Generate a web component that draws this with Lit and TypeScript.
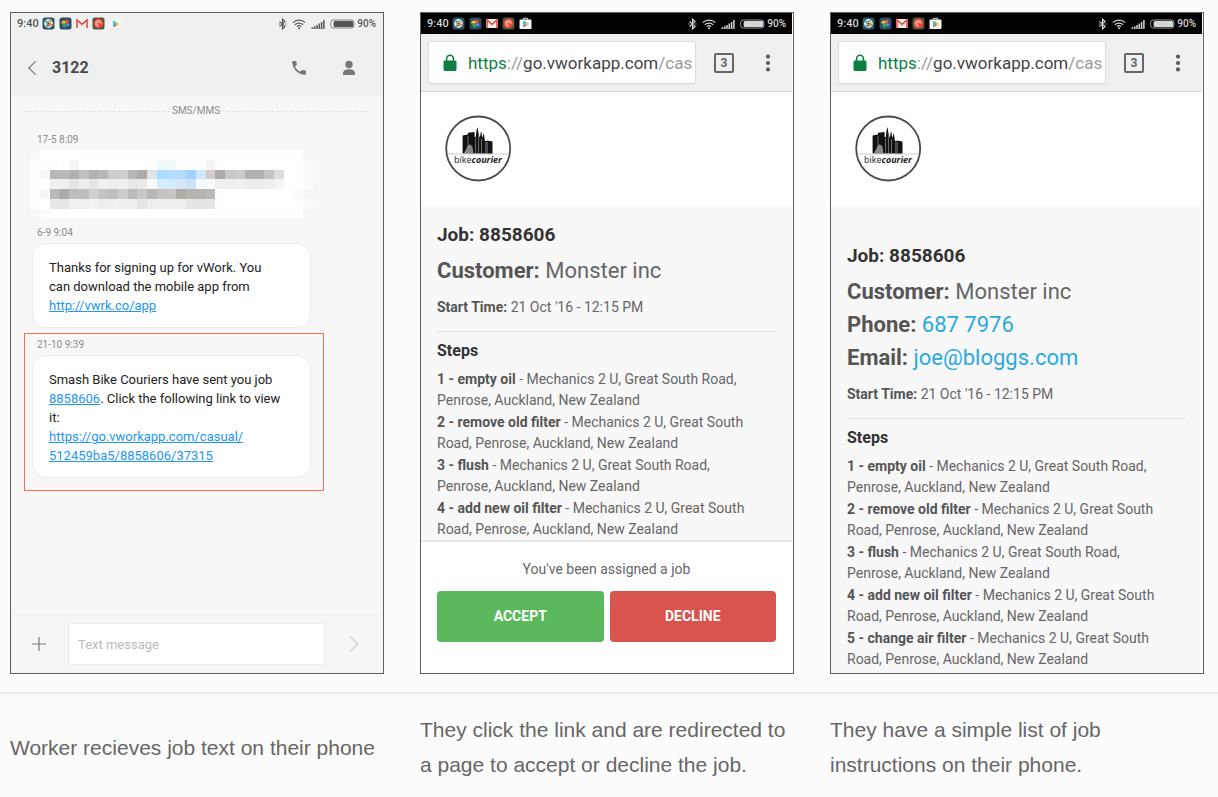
import { LitElement, html, css, svg, nothing } from "lit";
import { customElement, property } from "lit/decorators.js";

@customElement("status-bar")
class StatusBar extends LitElement {
  @property({ type: Boolean, reflect: true }) dark = false;

  static styles = css`
    :host {
      display: flex;
      align-items: center;
      height: 21px;
      flex: none;
      padding: 0 7px 0 6px;
      color: #555;
      font: 500 11px/21px Roboto, sans-serif;
    }
    :host([dark]) {
      padding-right: 6px;
      background: #000;
      color: #d6d6d6;
    }
    .apps {
      display: flex;
      gap: 4px;
      margin-left: 3px;
      flex: 1;
    }
    .radios {
      display: flex;
      align-items: center;
      gap: 5px;
      margin-right: 2px;
    }
    .charge {
      font-size: 10px;
    }
    svg {
      display: block;
    }
  `;

  render() {
    return html`
      <span>9:40</span>
      <span class="apps">
        <svg width="13" height="13" viewBox="0 0 13 13">
          <rect x=".5" y=".5" width="12" height="12" rx="2.5" fill="#2f5468" />
          <circle cx="6.5" cy="6.5" r="4.4" fill="#e9f2ee" />
          <path d="M3 5.4 9.4 3.4" stroke="#58c0c8" stroke-width="1.3" />
          <path d="M3.8 9.2 10.2 7.2" stroke="#d43a5c" stroke-width="1.3" />
          <path d="M4.2 3.4 6.2 10" stroke="#3aa673" stroke-width="1.2" />
          <path d="M7.4 2.8 9.2 9.4" stroke="#dfa02c" stroke-width="1.2" />
          <circle cx="6.6" cy="6.3" r=".9" fill="#333" />
        </svg>
        <svg width="13" height="13" viewBox="0 0 13 13">
          <rect x=".5" y=".5" width="12" height="12" rx="2.5" fill="#2c4c62" />
          <path d="M6.5 6.5V2.2c2 0 3.1 1.2 3.1 2.6 0 .8-.3 1.4-.8 1.7z" fill="#e8503f" />
          <path d="M6.5 6.5h4.3c0 2-1.2 3.1-2.6 3.1-.8 0-1.4-.3-1.7-.8z" fill="#4a8df0" />
          <path d="M6.5 6.5v4.3c-2 0-3.1-1.2-3.1-2.6 0-.8.3-1.4.8-1.7z" fill="#37a65a" />
          <path d="M6.5 6.5H2.2c0-2 1.2-3.1 2.6-3.1.8 0 1.4.3 1.7.8z" fill="#f4bf2c" />
        </svg>
        <svg width="12" height="13" viewBox="0 0 12 13">
          ${this.dark
            ? svg`<rect x="0" y="2" width="12" height="9" rx="1" fill="#f3eeee" />`
            : nothing}
          <path d="M1 11V3l5 4.4L11 3v8" fill="none" stroke="#dc4c40" stroke-width="1.6" />
        </svg>
        <svg width="13" height="13" viewBox="0 0 13 13">
          <rect x=".5" y=".5" width="12" height="12" rx="2.5" fill="#46563a" />
          <circle cx="6.5" cy="6.5" r="4.9" fill="#ee4538" />
          <path d="M9.4 6.3a2.9 2.9 0 1 0-2.9 3.1M8 6.4a1.5 1.5 0 1 0-1.5 1.5"
            fill="none" stroke="#ffd9d4" stroke-width=".9" />
        </svg>
        <svg width="13" height="13" viewBox="0 0 13 13">
          ${this.dark
            ? svg`<path d="M4.3 3V1.3h4.4V3" fill="none" stroke="#ddd" stroke-width="1" />
                <rect x=".5" y="2.6" width="12" height="9.4" rx=".8" fill="#f4f4f4" />`
            : svg`<rect x=".8" y="2.2" width="11.4" height="9.8" rx=".8" fill="#f8f8f8" />
                <path d="M1 12h11" stroke="#dcdede" stroke-width=".8" />`}
          <path d="M4 3.6v7l2.6-3.5z" fill="#2fc1ec" />
          <path d="M4 3.6 8 5.8 6.6 7.1z" fill="#34c37c" />
          <path d="M4 10.6 8 8.4 6.6 7.1z" fill="#ee4456" />
          <path d="M8 5.8 10.2 7.1 8 8.4 6.6 7.1z" fill="#f8b928" />
        </svg>
      </span>
      <span class="radios">
        <svg width="9" height="12" viewBox="0 0 9 12">
          <path d="M1.4 3.4 7 8.4 4.5 10.8V1.2L7 3.6 1.4 8.6"
            fill="none" stroke="currentColor" stroke-width="1.2" />
          <path d="M.6 6h1.2M7.2 6h1.2" stroke="currentColor" stroke-width="1.2" />
        </svg>
        <svg width="14" height="12" viewBox="0 0 14 12">
          <path d="M.8 4.6a9 9 0 0 1 12.4 0M2.8 6.7a6.2 6.2 0 0 1 8.4 0M4.8 8.6a3.4 3.4 0 0 1 4.4 0"
            fill="none" stroke="currentColor" stroke-width="1.2" />
          <circle cx="7" cy="10.2" r="1" fill="currentColor" />
        </svg>
        <svg width="14" height="12" viewBox="0 0 14 12">
          <path d="M1.3 10.6V9.3M3.7 10.6V8.3M6 10.6V7M8.3 10.6V5.6M10.6 10.6V4M12.9 10.6V2"
            stroke="currentColor" stroke-width="1.5" fill="none" />
          <path d="M.4 10.4h13.2" stroke="currentColor" stroke-width=".6" />
        </svg>
        <svg width="25" height="12" viewBox="0 0 25 12">
          <rect x=".6" y="2" width="23.4" height="8" rx="2.8" fill="none"
            stroke="currentColor" stroke-width=".9" opacity=".8" />
          <rect x="3.6" y="3" width="19.6" height="6" rx="1.6" fill="currentColor" />
        </svg>
      </span>
      <span class="charge">90%</span>
    `;
  }
}

@customElement("browser-bar")
class BrowserBar extends LitElement {
  static styles = css`
    :host {
      display: flex;
      align-items: center;
      height: 57px;
      flex: none;
      padding: 0 12px 0 8px;
      background: #f0f0f0;
      border-bottom: 1px solid #d6d6d6;
      font-family: Roboto, sans-serif;
    }
    .address {
      flex: 1;
      min-width: 0;
      display: flex;
      align-items: center;
      height: 41px;
      padding: 0 2px 0 14px;
      gap: 11px;
      background: #fff;
      border-radius: 2px;
      box-shadow: 0 0 1px 1px #dcdcdc, 0 1px 1px #c4c4c4;
      color: #444;
      font-size: 17px;
      line-height: 24px;
      text-decoration: none;
      white-space: nowrap;
    }
    .secure {
      color: #0b8043;
    }
    .faint {
      color: #999;
    }
    button {
      border: 0;
      background: none;
      padding: 0;
      display: grid;
      place-items: center;
      font: inherit;
      color: #666;
    }
    .tabs {
      width: 20px;
      height: 20px;
      margin-left: 19px;
      border: 2px solid #666;
      border-radius: 2px;
      font-size: 12px;
      font-weight: 700;
      line-height: 14px;
    }
    .menu {
      width: 24px;
      height: 24px;
      margin-left: 22px;
    }
    svg {
      display: block;
      flex: none;
    }
  `;

  render() {
    return html`
      <a class="address" href="#">
        <svg width="14" height="18" viewBox="0 0 14 18">
          <rect x=".5" y="6.4" width="13" height="10.6" rx="1.4" fill="#0b8043" />
          <path d="M3.6 7V4.6a3.4 3.4 0 0 1 6.8 0V7" fill="none" stroke="#0b8043" stroke-width="1.6" />
        </svg>
        <span><span class="secure">https</span><span class="faint">://</span>go.vworkapp.com<span class="faint">/cas</span></span>
      </a>
      <button class="tabs" aria-label="Open tabs">3</button>
      <button class="menu" aria-label="Menu">
        <svg width="6" height="18" viewBox="0 0 6 18">
          <circle cx="3" cy="2.6" r="2.1" fill="#5c5c5c" />
          <circle cx="3" cy="9" r="2.1" fill="#5c5c5c" />
          <circle cx="3" cy="15.4" r="2.1" fill="#5c5c5c" />
        </svg>
      </button>
    `;
  }
}

interface Step {
  name: string;
}

@customElement("job-page")
class JobPage extends LitElement {
  @property({ attribute: false }) steps: Step[] = [];
  @property({ type: Boolean, reflect: true }) accepted = false;

  static styles = css`
    :host {
      display: flex;
      flex-direction: column;
      flex: 1;
      min-width: 0;
      padding-right: 1px;
      background: #fff;
      color: #666;
      font: 14px/21px Roboto, sans-serif;
    }
    .brand {
      height: 114px;
      box-sizing: border-box;
      padding: 23px 0 0 24px;
    }
    .brand svg {
      display: block;
    }
    .word {
      font: 9px "Open Sans", sans-serif;
      fill: #222;
    }
    .strong {
      font-weight: 700;
      font-style: italic;
    }
    .job {
      flex: 1;
      padding: 17px 16px 0;
      background: #f8f8f8;
    }
    :host([accepted]) .job {
      padding: 38px 16px 3px;
    }
    h1,
    h2,
    p,
    ol {
      margin: 0;
      padding: 0;
    }
    h1 {
      font-size: 19px;
      line-height: 24px;
      color: #333;
      margin-bottom: 7px;
    }
    .contact {
      font-size: 22px;
      line-height: 33px;
    }
    .contact a {
      color: #29a9e1;
      text-decoration: none;
    }
    b {
      color: #555;
    }
    .start {
      margin: 10px 0 13px;
    }
    h2 {
      border-top: 1px solid #e2e2e2;
      padding-top: 7px;
      margin-bottom: 6px;
      font-size: 16px;
      line-height: 24px;
      color: #333;
    }
    ol {
      list-style: none;
      display: grid;
      gap: 1px;
      padding-right: 20px;
    }
    .offer {
      border-top: 2px solid #e8e8e8;
      padding: 17px 16px 31px;
      text-align: center;
    }
    .choices {
      display: grid;
      grid-template-columns: 1fr 1fr;
      gap: 6px;
      margin-top: 11px;
    }
    button {
      height: 51px;
      border: 0;
      border-radius: 4px;
      color: #fff;
      font: 700 14px/21px Roboto, sans-serif;
      text-transform: uppercase;
    }
    .accept {
      background: #5cb85c;
    }
    .decline {
      background: #d9534f;
    }
  `;

  render() {
    return html`
      <status-bar dark></status-bar>
      <browser-bar></browser-bar>
      <div class="brand">
        <svg width="67" height="67" viewBox="0 0 67 67" role="img" aria-label="bikecourier">
          <circle cx="33.2" cy="33.5" r="32" fill="#fff" stroke="#4a4a4a" stroke-width="1.8" />
          <path d="M2 39h62" stroke="#aaa" stroke-width=".6" />
          <path
            d="M17.6 38.3V20.4l5.4-.8V17.8l6.6-.8V22h1.2l.8-7 .9-3 .9 6 1.5 5 .9-6h.7l.7 6 1.6-5 1.1 8h1.8v-.4l5.8.8v12z"
            fill="#111" />
          <path d="M30.6 38V23M33.6 38V20M36.5 38V24M40.8 38V27M42.2 38V27M23 33V21" stroke="#ccc" stroke-width=".5" fill="none" />
          <path d="M19 38.3l3.6-7 2-2 2.8 2 1 7z" fill="#bbb" opacity=".7" />
          <text class="word" x="9" y="48">bike<tspan class="strong">courier</tspan></text>
        </svg>
      </div>
      <div class="job">
        <h1>Job: 8858606</h1>
        <p class="contact"><b>Customer:</b> Monster inc</p>
        ${this.accepted
          ? html`
              <p class="contact"><b>Phone:</b> <a href="tel:6877976">687 7976</a></p>
              <p class="contact"><b>Email:</b> <a href="mailto:joe@bloggs.com">joe@bloggs.com</a></p>
            `
          : nothing}
        <p class="start"><b>Start Time:</b> 21 Oct '16 - 12:15 PM</p>
        <h2>Steps</h2>
        <ol>
          ${this.steps.map(
            (s, i) => html`<li><b>${`${i + 1} - ${s.name}`}</b> - Mechanics 2 U, Great South Road, Penrose, Auckland, New Zealand</li>`
          )}
        </ol>
      </div>
      ${this.accepted
        ? nothing
        : html`
            <div class="offer">
              <p>You've been assigned a job</p>
              <div class="choices">
                <button class="accept">Accept</button>
                <button class="decline">Decline</button>
              </div>
            </div>
          `}
    `;
  }
}

const g = (s: string) => s.split(" ").map((h) => (h.length === 2 ? h + h + h : h));

/* Mosaic that hides the text of the first message: one colour per cell. */
const MOSAIC: string[][] = [
  g("f9 ff ff ff ff fd fd fe fe fd fd fe fd fd fd fd fe fe fe fe fd fd fe fe fe fe fe fe f8"),
  g("fd fd fd ff f7 ff ff ff ff ff ff ff ff f3faff f3faff ff ff ff f3 fd ff ff ff ff ff ff ff ff fb"),
  g("fd f7 b7 b9 b1 c0 b1 b7 cc cf b7 aeaca9 dde5ea acdcff b5ddff b5dcff a0d3ff cfe8fb d3cbc7 ab c8 cc b1 b1 c4 dd ff ff fb"),
  g("fd ff f0 f0 e5 ee e6 f0 ee f0 e8 eceae8 fa d3ecff d3ecff d2e6f8 cfe3f8 f5faff fa f0 ee f0 ec ec ee f3 ff ff fb"),
  g("fd f7 bb ac bd bf d0 c4 bf cc bb c8 b7 c8c3be cbc5c0 b1aca6 bab2ad b9b2ad b9 fd ff ff ff ff ff ff ff fb"),
  g("fd ff e6 e6 f0 f0 f3 ee f0 ee ee e6 ee ee ecf0ef ee e4 e4 e4 fd ff ff ff ff ff ff ff ff fb"),
  g("f9 fc ff ff ff ff ff ff ff ff ff ff ff ff ff ff ff ff ff fd fe fe fe fe fe fe fe fe f8"),
];

@customElement("sms-thread")
class SmsThread extends LitElement {
  static styles = css`
    :host {
      display: flex;
      flex-direction: column;
      flex: 1;
      min-width: 0;
      background: #f7f7f7;
      font-family: Roboto, sans-serif;
      color: #222;
    }
    .top {
      background: #eff1f1;
    }
    header {
      display: flex;
      align-items: center;
      height: 56px;
      padding: 6px 25px 0 12px;
    }
    h1 {
      flex: 1;
      margin: 0 0 0 11px;
      font-size: 16px;
      line-height: 24px;
      color: #4a4a4a;
    }
    button {
      border: 0;
      padding: 0;
      background: none;
      display: grid;
      place-items: center;
      width: 18px;
      height: 24px;
    }
    .contact {
      margin-left: 32px;
    }
    .thread {
      flex: 1;
      padding: 7px 59px 0 13px;
    }
    .channel {
      display: flex;
      align-items: center;
      gap: 2px;
      margin: 0 -44px 9px 0;
      font-size: 10px;
      line-height: 16px;
      color: #8c8c8c;
    }
    .channel::before,
    .channel::after {
      content: "";
      flex: 1;
      border-top: 1px dashed #e2e2e2;
    }
    .message {
      border: 1px solid transparent;
      padding: 2px 12px 2px 7px;
    }
    .picked {
      border-color: #fc6d50;
      margin-top: 2px;
      padding-bottom: 12px;
    }
    time {
      display: block;
      padding-left: 5px;
      margin-bottom: 1px;
      font-size: 10px;
      line-height: 18px;
      color: #8c8c8c;
    }
    .mosaic {
      margin: 0 -2px;
    }
    .bubble {
      margin: 0;
      padding: 14px 26px 12px 16px;
      border: 1px solid #ececec;
      border-radius: 14px;
      background: #fff;
      font-size: 13px;
      line-height: 19px;
    }
    .bubble a {
      color: #2196f3;
    }
    footer {
      display: flex;
      align-items: center;
      height: 58px;
      padding: 0 20px 0 19px;
      border-top: 1px solid #eee;
      background: #f5f7f7;
    }
    input {
      flex: 1;
      min-width: 0;
      box-sizing: border-box;
      height: 42px;
      margin: 0 20px;
      padding: 0 9px;
      border: 1px solid #ebebeb;
      border-radius: 0;
      background: #fff;
      font: 13px/20px Roboto, sans-serif;
    }
    input::placeholder {
      color: #bbb;
      opacity: 1;
    }
    svg {
      display: block;
    }
  `;

  render() {
    return html`
      <div class="top">
        <status-bar></status-bar>
        <header>
          <button aria-label="Back">
            <svg width="10" height="16" viewBox="0 0 10 16">
              <path d="M8.6 1.4 1.8 8l6.8 6.6" fill="none" stroke="#777" stroke-width="1.2" />
            </svg>
          </button>
          <h1>3122</h1>
          <button aria-label="Call">
            <svg width="16" height="16" viewBox="0 0 16 16">
              <path
                d="M1.2 1.7C1.2 1.2 1.5.9 2 .9h2.5c.4 0 .7.3.8.7l.5 2.7c0 .3 0 .6-.3.9L4 6.5c1.1 2.3 3 4.2 5.4 5.3l1.3-1.5c.2-.3.5-.4.9-.3l2.7.6c.4.1.7.4.7.8v2.4c0 .5-.4.9-.9.9C7.3 14.7 1.2 8.8 1.2 1.7z"
                fill="#777" />
            </svg>
          </button>
          <button class="contact" aria-label="Contact">
            <svg width="14" height="16" viewBox="0 0 14 16">
              <circle cx="7" cy="4.5" r="3.7" fill="#777" />
              <path d="M1 15v-1.6c0-2.6 2.4-4.2 6-4.2s6 1.6 6 4.2V15z" fill="#777" />
            </svg>
          </button>
        </header>
      </div>
      <div class="thread">
        <div class="channel">SMS/MMS</div>
        <div class="message">
          <time>17-5 8:09</time>
          <div class="mosaic">
            <svg width="100%" viewBox="0 0 29 7" shape-rendering="crispEdges" aria-hidden="true">
              ${MOSAIC.map((row, y) =>
                row.map((c, x) => svg`<rect x=${x} y=${y} width="1" height="1" fill=${"#" + c} />`)
              )}
            </svg>
          </div>
        </div>
        <div class="message">
          <time>6-9 9:04</time>
          <p class="bubble">Thanks for signing up for vWork. You can download the mobile app from <a href="#">http://vwrk.co/app</a></p>
        </div>
        <div class="message picked">
          <time>21-10 9:39</time>
          <p class="bubble">
            Smash Bike Couriers have sent you job <a href="#">8858606</a>. Click the following link to view it:<br />
            <a href="#">https://go.vworkapp.com/casual/<wbr />512459ba5/8858606/37315</a>
          </p>
        </div>
      </div>
      <footer>
        <button aria-label="Attach">
          <svg width="16" height="16" viewBox="0 0 16 16">
            <path d="M8 1v14M1 8h14" stroke="#777" stroke-width="1.2" />
          </svg>
        </button>
        <input type="text" placeholder="Text message" aria-label="Text message" />
        <button aria-label="Send">
          <svg width="10" height="18" viewBox="0 0 10 18">
            <path d="M1 1.4 8.8 9 1 16.6" fill="none" stroke="#ccc" stroke-width="1.2" />
          </svg>
        </button>
      </footer>
    `;
  }
}

const STEPS: Step[] = [
  { name: "empty oil" },
  { name: "remove old filter" },
  { name: "flush" },
  { name: "add new oil filter" },
  { name: "change air filter" },
];

@customElement("app-root")
class AppRoot extends LitElement {
  static styles = css`
    :host {
      display: block;
      min-height: 100vh;
      background: #fcfcfc;
    }
    .row {
      display: grid;
      grid-template-columns: repeat(3, minmax(0, 1fr));
      gap: 36px;
      padding: 12px 14px 18px 10px;
    }
    .phone {
      display: flex;
      border: 1px solid #5f5f5f;
    }
    .captions {
      align-items: center;
      border-top: 2px solid #ededed;
      padding-top: 18px;
      padding-bottom: 15px;
      color: #666;
      font: 21px/35px "Liberation Sans", Arial, sans-serif;
    }
    .captions p {
      margin: 0;
    }
  `;

  render() {
    return html`
      <div class="row">
        <div class="phone"><sms-thread></sms-thread></div>
        <div class="phone"><job-page .steps=${STEPS.slice(0, 4)}></job-page></div>
        <div class="phone"><job-page accepted .steps=${STEPS}></job-page></div>
      </div>
      <div class="row captions">
        <p>Worker recieves job text on their phone</p>
        <p>They click the link and are redirected to a page to accept or decline the job.</p>
        <p>They have a simple list of job instructions on their phone.</p>
      </div>
    `;
  }
}
